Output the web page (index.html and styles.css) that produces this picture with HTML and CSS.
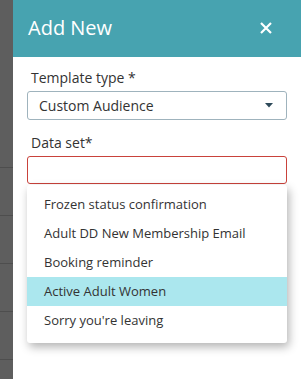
FILE: index.html
```html
<!DOCTYPE html>
<html lang="en">
<head>
    <meta charset="UTF-8">
    <meta name="viewport" content="width=device-width, initial-scale=1.0">
    <title>Add New</title>
    <link rel="stylesheet" href="styles.css">
</head>
<body>
    <div class="backdrop">
        <div class="row"></div>
        <div class="row"></div>
        <div class="row"></div>
        <div class="row"></div>
        <div class="row last"></div>
    </div>

    <div class="panel">
        <div class="panel-header">
            <h1>Add New</h1>
            <svg class="close" width="12" height="12" viewBox="0 0 12 12">
                <path d="M1 1 L11 11 M11 1 L1 11" stroke="#fff" stroke-width="2.2" fill="none"/>
            </svg>
        </div>

        <div class="panel-body">
            <label class="field-label">Template type *</label>
            <div class="select">
                <span>Custom Audience</span>
                <svg class="caret" width="8" height="5" viewBox="0 0 8 5">
                    <path d="M0 0 H8 L4 4.5 Z" fill="#2e4a5a"/>
                </svg>
            </div>

            <label class="field-label">Data set*</label>
            <div class="combo">
                <div class="input invalid"></div>
                <!-- Options list -->
                <ul class="options">
                    <li>Frozen status confirmation</li>
                    <li>Adult DD New Membership Email</li>
                    <li>Booking reminder</li>
                    <li class="active">Active Adult Women</li>
                    <li>Sorry you're leaving</li>
                </ul>
            </div>
        </div>
    </div>
</body>
</html>
```

FILE: styles.css
```css
/* Global Styles */
body {
    font-family: 'Open Sans', sans-serif;
    margin: 0;
    padding: 0;
    display: flex;
    height: 379px;
    overflow: hidden;
    background-color: #fff;
}

/* Dimmed page behind the panel */
.backdrop {
    width: 13px;
    flex-shrink: 0;
    background-color: #5e5e5e;
    padding-top: 167px;
    box-sizing: border-box;
    overflow: hidden;
}

.backdrop .row {
    height: 47px;
    border-top: 1px solid #4e4e4e;
}

.backdrop .row.last {
    height: 18px;
}

/* Panel */
.panel {
    flex-grow: 1;
    display: flex;
    flex-direction: column;
    background-color: #fff;
}

.panel-header {
    height: 57px;
    background-color: #47a3b0;
    display: flex;
    align-items: center;
    justify-content: space-between;
    padding: 0 29px 0 15px;
}

.panel-header h1 {
    margin: 0;
    color: #fff;
    font-size: 20px;
    font-weight: 400;
    padding-bottom: 2px;
}

.close {
    margin-bottom: 2px;
}

.panel-body {
    padding: 11px 14px 0 14px;
}

.field-label {
    display: block;
    font-size: 14px;
    color: #333;
    line-height: 20px;
    padding-left: 4px;
    margin-bottom: 3px;
}

.select {
    height: 27px;
    border: 1px solid #9fb3bd;
    border-radius: 3px;
    display: flex;
    align-items: center;
    justify-content: space-between;
    padding: 0 13px 0 11px;
    font-size: 14px;
    color: #333;
    margin-bottom: 13px;
}

.combo {
    position: relative;
}

.input {
    height: 26px;
    border: 1px solid #ccc;
    border-radius: 3px;
}

.input.invalid {
    border-color: #c9423b;
}

.options {
    position: absolute;
    top: 29px;
    left: 0;
    right: 0;
    margin: 0;
    padding: 5px 0 8px 0;
    list-style: none;
    background-color: #fff;
    border-radius: 3px;
    box-shadow: 2px 4px 10px rgba(0, 0, 0, 0.3);
}

.options li {
    height: 29px;
    line-height: 29px;
    padding-left: 17px;
    font-size: 13px;
    color: #333;
}

.options li.active {
    background-color: #abe7ee;
}
```
